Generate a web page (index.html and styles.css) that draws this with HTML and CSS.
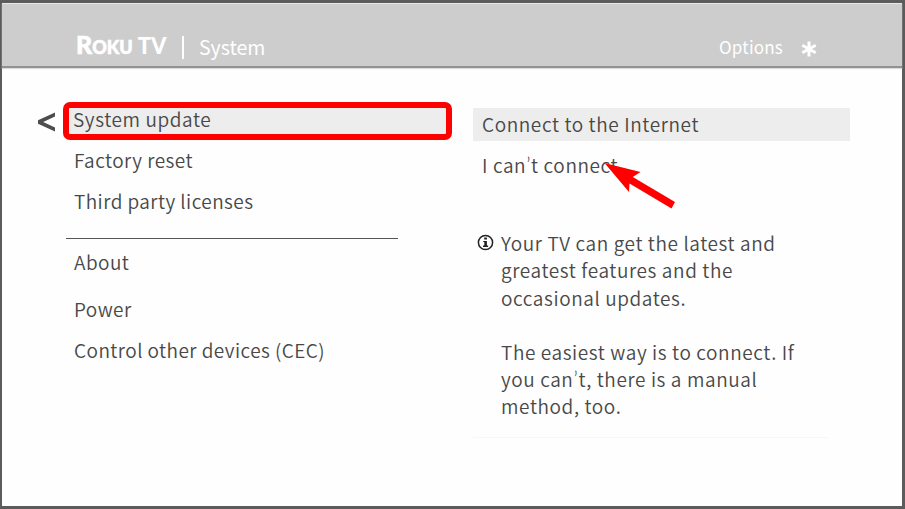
FILE: index.html
```html
<!DOCTYPE html>
<html lang="en">

<head>
  <meta charset="UTF-8">
  <title>Roku TV | System</title>
  <link rel="stylesheet" href="styles.css">
</head>

<body>
  <div class="screen">
    <header class="header">
      <h1 class="logo"><span class="logo-r">R</span><span class="logo-oku">OKU</span> <span class="logo-tv">TV</span></h1>
      <span class="divider"></span>
      <span class="section">System</span>
      <span class="options">Options</span>
      <svg class="star" width="16" height="16" viewBox="0 0 16 16">
        <path d="M8 0.5V15.5M1.3 4.2L14.7 11.8M14.7 4.2L1.3 11.8" stroke="#fff" stroke-width="3" />
      </svg>
    </header>

    <main class="content">
      <svg class="back" width="19" height="20" viewBox="0 0 19 20">
        <path d="M18 0.5V4.5L6.2 10L18 15.5V19.5L1 11.7V8.3Z" fill="#4d4d4d" />
      </svg>

      <nav class="menu">
        <ul>
          <li class="selected">System update</li>
          <li>Factory reset</li>
          <li>Third party licenses</li>
        </ul>
        <ul class="more">
          <li class="about">About</li>
          <li>Power</li>
          <li>Control other devices (CEC)</li>
        </ul>
      </nav>

      <section class="panel">
        <ul>
          <li class="active">Connect to the Internet</li>
          <li class="pointed">I can<span class="apos">’</span>t connect
            <svg class="pointer" width="74" height="48" viewBox="0 0 74 48">
              <path d="M3.5 2L39.5 11L31.8 16L74 41L70.5 47.5L28.5 22.5L28 31Z" fill="#f00" />
            </svg>
          </li>
        </ul>
        <div class="info">
          <svg class="info-icon" width="17" height="17" viewBox="0 0 17 17">
            <circle cx="8.5" cy="8.5" r="7.1" fill="none" stroke="#222" stroke-width="1.5" />
            <path d="M7.2 3.5h2.7v2.1H7.2zM6.2 6.9h3.7v4.7h1.2v1.3H6v-1.3h1.3V8.1H6.2z" fill="#222" />
          </svg>
          <div class="info-text">
            <p>Your TV can get the latest and<br>greatest features and the<br>occasional updates.</p>
            <p>The easiest way is to connect. If<br>you can<span class="apos">’</span>t, there is a manual<br>method, too.</p>
          </div>
        </div>
      </section>
    </main>
  </div>
</body>

</html>
```

FILE: styles.css
```css
* {
  box-sizing: border-box;
}

body {
  margin: 0;
  color: #484848;
  font-family: "Noto Sans CJK SC", "Open Sans", sans-serif;
  font-size: 19px;
  font-weight: 350;
  letter-spacing: 0.45px;
}

ul {
  list-style: none;
  margin: 0;
  padding: 0;
}

p {
  margin: 0;
}

.screen {
  height: 509px;
  background: #fefefe;
  border: 2px solid #5c5c5c;
  border-width: 3px 3px 3px 2px;
}

.header {
  display: flex;
  align-items: center;
  height: 65px;
  padding: 24px 85px 0 74px;
  background: #cdcdcd;
  border-top: 1px solid #e8e8e8;
  border-bottom: 2px solid #929292;
  box-shadow: 0 1px 1px #ddd;
  color: #fff;
  line-height: 40px;
}

.logo {
  display: flex;
  align-items: baseline;
  width: 106px;
  margin: -3px 0 0;
  font-family: Lato, sans-serif;
  font-weight: 900;
  letter-spacing: 0;
  -webkit-text-stroke: 0.6px #fff;
}

.logo-r {
  font-size: 25px;
}

.logo-oku {
  font-size: 18px;
}

.logo-tv {
  margin-left: 5px;
  font-size: 22px;
  -webkit-text-stroke: 0;
}

.divider {
  width: 2px;
  height: 23px;
  margin-right: 15px;
  background: #fff;
}

.section {
  margin-top: -1px;
  font-size: 19.5px;
  font-weight: 400;
  letter-spacing: 0;
}

.options {
  margin-left: auto;
  font-size: 17px;
  font-weight: 400;
  letter-spacing: 0.2px;
}

.star {
  margin: 3px 0 0 18px;
}

.content {
  display: flex;
  align-items: flex-start;
  padding: 33px 0 0 35px;
}

.back {
  margin: 11px 7px 0 0;
}

.menu {
  width: 389px;
}

.menu li {
  height: 41px;
  padding-left: 11px;
  line-height: 37px;
}

.menu .selected {
  height: 38px;
  margin: 1px 0;
  padding-left: 4px;
  background: #ededed;
  border: 6px solid #f00;
  border-radius: 7px;
  letter-spacing: 0.6px;
  line-height: 22px;
}

.more {
  width: 332px;
  margin: 15px 0 0 3px;
  padding-top: 4px;
  border-top: 1px solid #555;
}

.menu .more li {
  padding-left: 8px;
}

.menu .more .about {
  height: 47px;
}

.panel {
  width: 377px;
  margin: 7px 0 0 21px;
  letter-spacing: 0.6px;
}

.panel li {
  height: 33px;
  padding-left: 9px;
  line-height: 31px;
}

.panel .active {
  background: #ededed;
}

.panel .pointed {
  position: relative;
  margin-top: 8px;
}

/* the CJK face draws this full width */
.apos {
  font-family: Lato, sans-serif;
  font-size: 21px;
  line-height: 1;
}

/* lies over the end of the label */
.pointer {
  position: absolute;
  top: 12px;
  left: 128px;
}

.info {
  display: flex;
  width: 356px;
  margin-top: 47px;
  padding: 0 0 17px 4px;
  border-bottom: 1px solid #f7f7f7;
}

.info-icon {
  margin: 5px 7px 0 0;
}

.info-text {
  line-height: 27.3px;
}

.info-text p + p {
  margin-top: 27px;
}
```
